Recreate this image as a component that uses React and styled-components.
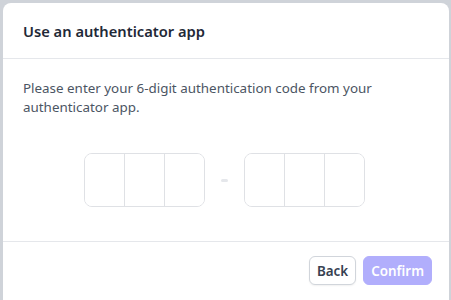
import styled, { createGlobalStyle } from 'styled-components'

const GlobalStyle = createGlobalStyle`
  html, body {
    margin: 0;
    padding: 0;
    background: #cfd3d9;
    font-family: "Noto Sans", "Open Sans", sans-serif;
  }
  #root {
    width: 451px;
    height: 300px;
    overflow: hidden;
  }
`

const Overlay = styled.div`
  width: 451px;
  height: 300px;
  padding: 3px 2px 0 3px;
  box-sizing: border-box;
  overflow: hidden;
`

const Modal = styled.div`
  background: #ffffff;
  border-radius: 8px 8px 0 0;
  height: 320px;
  display: flex;
  flex-direction: column;
`

const Header = styled.div`
  height: 56px;
  box-sizing: border-box;
  padding: 0 20px;
  display: flex;
  align-items: center;
  border-bottom: 1px solid #e5e7eb;
`

const Title = styled.h2`
  margin: 0;
  font-size: 14.7px;
  font-weight: 600;
  color: #1f2937;
`

const Body = styled.div`
  padding: 20px 20px 34px;
  border-bottom: 1px solid #e5e7eb;
`

const Text = styled.p`
  margin: 0;
  font-size: 13.4px;
  line-height: 19px;
  color: #4b5563;
  max-width: 350px;
`

const CodeRow = styled.div`
  display: flex;
  align-items: center;
  justify-content: center;
  gap: 16px;
  margin-top: 36px;
  padding-right: 4px;
`

const Group = styled.div`
  display: flex;
  border: 1px solid #dfe1e5;
  border-radius: 8px;
  overflow: hidden;
`

const Cell = styled.input`
  width: 39px;
  height: 52px;
  border: none;
  border-left: ${(p) => (p.$first ? 'none' : '1px solid #dfe1e5')};
  padding: 0;
  text-align: center;
  font-size: 20px;
  outline: none;
  background: #fff;
`

const Dash = styled.span`
  width: 7px;
  height: 3px;
  border-radius: 2px;
  background: #e5e7eb;
`

const Footer = styled.div`
  display: flex;
  justify-content: flex-end;
  gap: 7px;
  padding: 14px 17px;
`

const Button = styled.button`
  height: 29px;
  padding: 0 7px;
  border-radius: 6px;
  font-family: inherit;
  font-size: 13.4px;
  font-weight: 600;
  border: 1px solid ${(p) => (p.$primary ? '#b1aefc' : '#d1d5db')};
  background: ${(p) => (p.$primary ? '#b1aefc' : '#ffffff')};
  color: ${(p) => (p.$primary ? '#ffffff' : '#374151')};
  box-shadow: ${(p) => (p.$primary ? 'none' : '0 1px 2px rgba(0,0,0,0.06)')};
`

export default function App() {
  return (
    <>
      <GlobalStyle />
      <Overlay>
        <Modal>
          <Header>
            <Title>Use an authenticator app</Title>
          </Header>
          <Body>
            <Text>
              Please enter your 6-digit authentication code from your
              authenticator app.
            </Text>
            <CodeRow>
              <Group>
                <Cell $first maxLength={1} />
                <Cell maxLength={1} />
                <Cell maxLength={1} />
              </Group>
              <Dash />
              <Group>
                <Cell $first maxLength={1} />
                <Cell maxLength={1} />
                <Cell maxLength={1} />
              </Group>
            </CodeRow>
          </Body>
          <Footer>
            <Button>Back</Button>
            <Button $primary disabled>
              Confirm
            </Button>
          </Footer>
        </Modal>
      </Overlay>
    </>
  )
}
